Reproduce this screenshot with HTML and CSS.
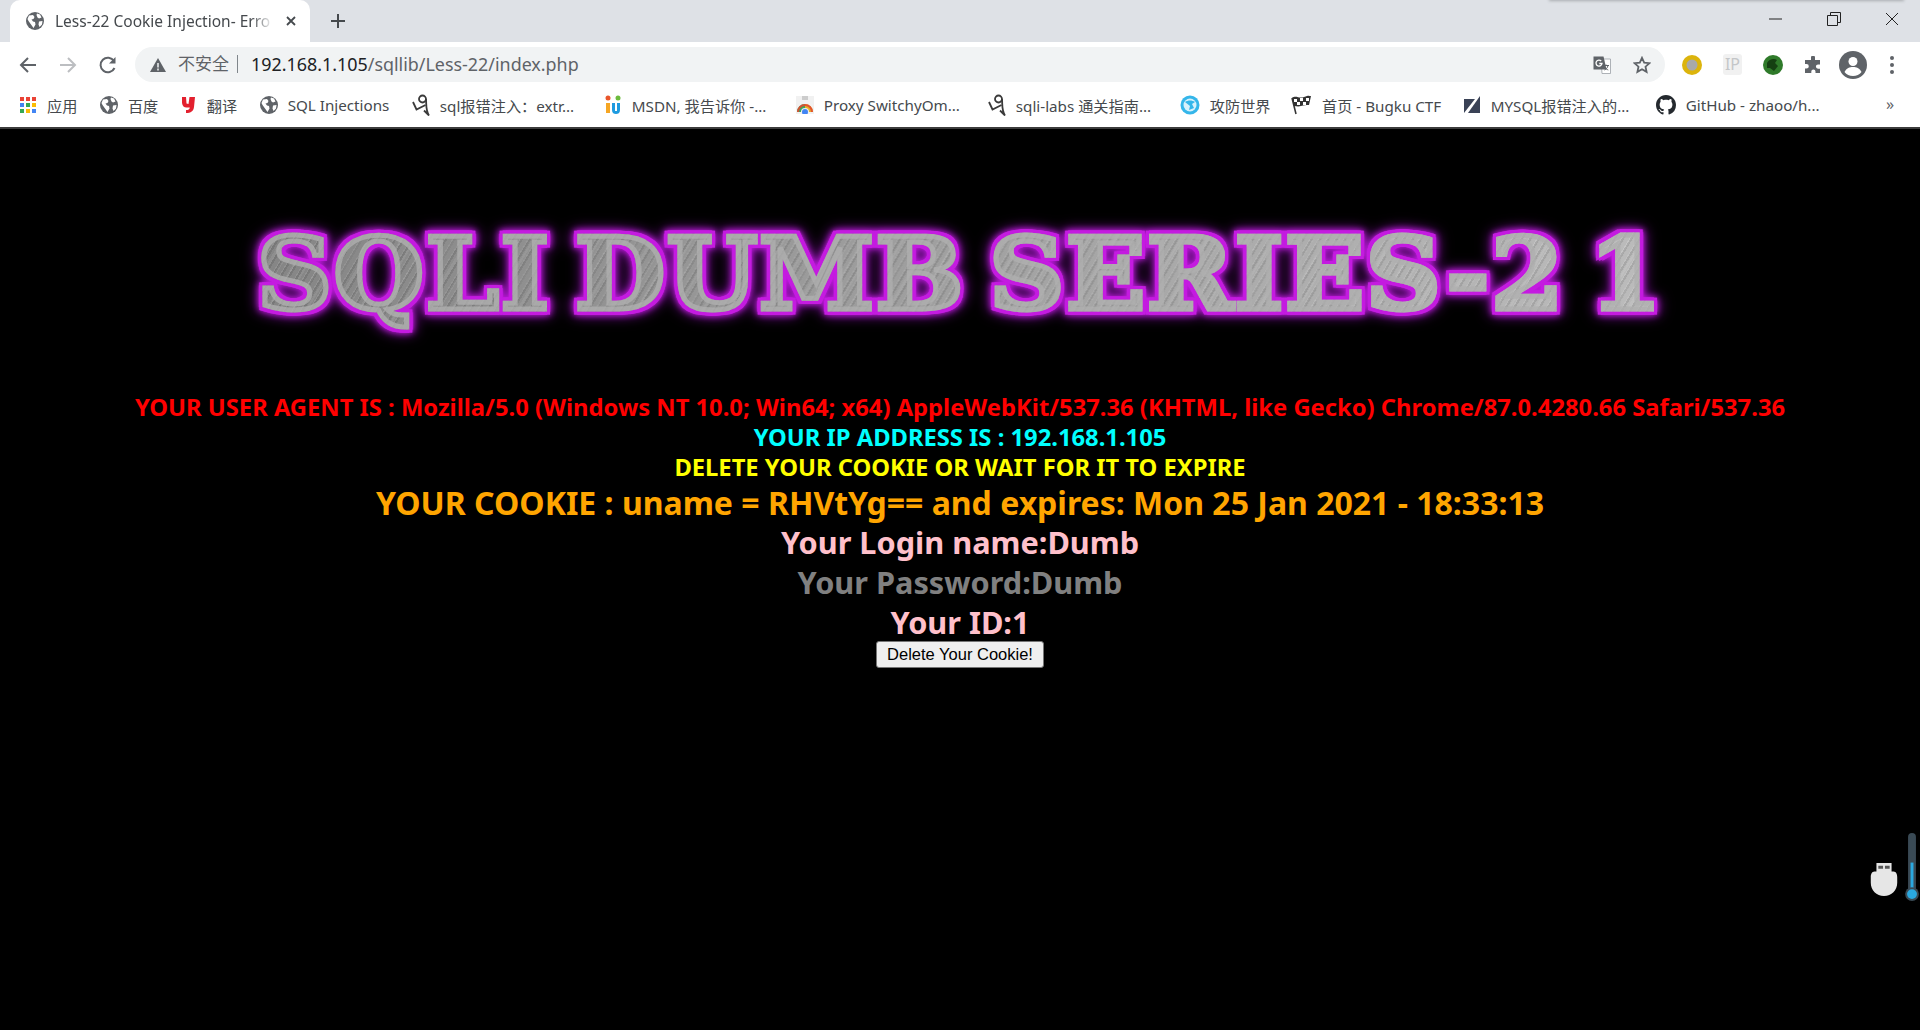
FILE: index.html
```html
<!DOCTYPE html>
<html lang="zh-CN">
<head>
    <meta charset="UTF-8" />
    <title>Less-22 Cookie Injection- Error Based- Double Quotes</title>
    <link rel="stylesheet" href="styles.css">
</head>
<body>

    <svg class="sprites" width="0" height="0">
        <symbol id="globe" viewBox="0 0 18 18">
            <circle cx="9" cy="9" r="9" fill="#5f6368"/>
            <path d="M3 3.500 7 3l1.500 2-1 2-2 .5 1.500 2 2 .5.500 2.500L7.500 16 5 12.500 2.500 9 1.500 7zM11 1.500l3 1 1.500 3-2.500 1-1.500-1-1-2.500zM13 9.500l3.500-.5-.5 3.500-2.500 2.500-1-2.500z" fill="#fff"/>
        </symbol>
        <symbol id="dog" viewBox="0 0 18 22">
            <path d="M1 8l3.500 7.500L13.500 11" fill="none" stroke="#3a3a3a" stroke-width="1.800"/>
            <circle cx="10.500" cy="5" r="3.500" fill="none" stroke="#3a3a3a" stroke-width="1.800"/>
            <path d="M14 5c.5 6-.5 11 3 16.500l-5-5" fill="none" stroke="#3a3a3a" stroke-width="1.800"/>
        </symbol>
    </svg>

    <div class="tab-strip">
        <div class="tab">
            <svg class="tab-icon" width="18" height="18"><use href="#globe"/></svg>
            <span class="tab-title">Less-22 Cookie Injection- Erro</span>
            <svg class="tab-close" width="10" height="10" viewBox="0 0 10 10"><path d="M1 1l8 8M9 1 1 9" stroke="#45494d" stroke-width="1.800"/></svg>
        </div>
        <svg class="new-tab" width="16" height="16" viewBox="0 0 16 16"><path d="M8 1v14M1 8h14" stroke="#45494d" stroke-width="2"/></svg>
        <div class="window-controls">
            <svg width="14" height="14" viewBox="0 0 14 14"><path d="M0 7h13" stroke="#222" stroke-width="1"/></svg>
            <svg width="14" height="14" viewBox="0 0 14 14"><path d="M.5 3.500h10v10H.5zM3.500 3.500v-3h10v10h-3" fill="none" stroke="#222"/></svg>
            <svg width="14" height="14" viewBox="0 0 14 14"><path d="M1 1l12 12M13 1 1 13" stroke="#222"/></svg>
        </div>
    </div>

    <div class="toolbar">
        <svg class="nav-icon" width="18" height="18" viewBox="0 0 18 18"><path d="M17 9H2M9 2 2 9l7 7" fill="none" stroke="#5f6368" stroke-width="2"/></svg>
        <svg class="nav-icon" width="18" height="18" viewBox="0 0 18 18"><path d="M1 9h15M9 2l7 7-7 7" fill="none" stroke="#bcbec1" stroke-width="2"/></svg>
        <svg class="nav-icon" width="18" height="18" viewBox="0 0 18 18"><path d="M15.500 12A7.300 7.300 0 1 1 15 5" fill="none" stroke="#5f6368" stroke-width="2"/><path d="M16.500 1v6.500H10z" fill="#5f6368"/></svg>
        <div class="omnibox">
            <svg class="warn-icon" width="16" height="14" viewBox="0 0 16 14"><path d="M8 0l8 14H0z" fill="#5f6368"/><path d="M8 5v4.500M8 10.500v2" stroke="#f1f3f4" stroke-width="1.500"/></svg>
            <span class="not-secure">不安全</span>
            <span class="url"><b>192.168.1.105</b>/sqllib/Less-22/index.php</span>
            <svg class="omni-icon" width="18" height="18" viewBox="0 0 18 18"><path d="M8 3h9.500v14.500H9z" fill="#fff" stroke="#9aa0a6" stroke-width=".8"/><path d="M.5.500h10l3 13H.5z" fill="#5f6368"/><path d="M8.200 5A3 3 0 1 0 9 7.500H6.300" fill="none" stroke="#fff" stroke-width="1.300"/><path d="M10.500 9.500h5.500M13 8.500v1M15 9.500c-.5 2.500-2 3.800-3.500 4.500M11.500 11c1 1.500 2.500 2.500 3.800 3" fill="none" stroke="#5f6368"/></svg>
            <svg class="omni-icon" width="18" height="18" viewBox="0 0 18 18"><path d="M9 1.800l2.200 4.800 5.200.6-3.900 3.500 1.100 5.200L9 13.300l-4.600 2.600 1.100-5.200L1.600 7.200l5.200-.6z" fill="none" stroke="#5f6368" stroke-width="1.800"/></svg>
        </div>
        <div class="extensions">
            <svg width="20" height="20" viewBox="0 0 20 20"><circle cx="10" cy="10" r="10" fill="#dcb40c"/><circle cx="10" cy="10" r="5.500" fill="#a9a9a9"/></svg>
            <span class="ip-ext">IP</span>
            <svg width="20" height="20" viewBox="0 0 20 20"><circle cx="10" cy="10" r="10" fill="#2f7a2a"/><path d="M4 8c2-4 7-5 10-3l-2 3 3 3-4 5-4-3-3 0z" fill="#153f12"/></svg>
            <svg width="18" height="18" viewBox="0 0 18 18"><path d="M7 1.500a2 2 0 0 1 4 0V4h5v4.500h-2a2.100 2.100 0 0 0 0 4.200h2V17h-4.500v-1.500a2.100 2.100 0 0 0-4.200 0V17H1v-4.500h1.500a2.300 2.300 0 0 0 0-4.600H1V4h6z" fill="#5f6368"/></svg>
            <svg class="avatar" width="28" height="28" viewBox="0 0 28 28"><circle cx="14" cy="14" r="14" fill="#5f6368"/><circle cx="14" cy="10.500" r="4.500" fill="#fff"/><path d="M5.500 21c2-4 5-5 8.500-5s6.500 1 8.500 5c-2 2.500-5 4-8.500 4s-6.500-1.500-8.500-4z" fill="#fff"/></svg>
            <svg class="menu-dots" width="4" height="18" viewBox="0 0 4 18"><circle cx="2" cy="2" r="2" fill="#5f6368"/><circle cx="2" cy="9" r="2" fill="#5f6368"/><circle cx="2" cy="16" r="2" fill="#5f6368"/></svg>
        </div>
    </div>

    <div class="bookmarks">
        <a class="bookmark">
            <svg width="17" height="17" viewBox="0 0 17 17">
                <path d="M0 0h4v4H0z" fill="#ea4335"/><path d="M6 0h4v4H6z" fill="#ea4335"/><path d="M12 0h4v4h-4z" fill="#ea4335"/>
                <path d="M0 6h4v4H0z" fill="#4285f4"/><path d="M6 6h4v4H6z" fill="#34a853"/><path d="M12 6h4v4h-4z" fill="#fbbc05"/>
                <path d="M0 12h4v4H0z" fill="#34a853"/><path d="M6 12h4v4H6z" fill="#fbbc05"/><path d="M12 12h4v4h-4z" fill="#4285f4"/>
            </svg>
            <span>应用</span>
        </a>
        <a class="bookmark"><svg width="18" height="18"><use href="#globe"/></svg><span>百度</span></a>
        <a class="bookmark">
            <svg width="16" height="18" viewBox="0 0 16 18"><path d="M1 1h4l.5 6.500 2 .5L8.500 1H14l-1 10c-.5 4-3 6-8 6v-3c2.500 0 3.500-.5 3.800-2.500H5.500C3 11.500 1.500 10 1 7z" fill="#e3202e"/></svg>
            <span>翻译</span>
        </a>
        <a class="bookmark"><svg width="18" height="18"><use href="#globe"/></svg><span>SQL Injections</span></a>
        <a class="bookmark long"><svg width="18" height="22"><use href="#dog"/></svg><span>sql报错注入：extr...</span></a>
        <a class="bookmark long">
            <svg width="18" height="20" viewBox="0 0 18 20"><circle cx="4" cy="3" r="2.500" fill="#e9562a"/><circle cx="14" cy="3" r="2.500" fill="#6cbb3c"/><path d="M2 8h4v10H2z" fill="#f6a623"/><path d="M8 8v7c0 3 2 4 4 4s4-1 4-4V8h-3v8h-2V8z" fill="#1e9be0"/></svg>
            <span>MSDN, 我告诉你 -...</span>
        </a>
        <a class="bookmark long">
            <svg width="18" height="18" viewBox="0 0 18 18"><path d="M0 0h18v18H0z" fill="#f1f1f1"/><path d="M6 0h6v4H6z" fill="#ccc"/><path d="M1 16a8 8 0 0 1 8-8v4a4 4 0 0 0-4 4z" fill="#3ba55d"/><path d="M9 8a8 8 0 0 1 8 8h-4a4 4 0 0 0-4-4z" fill="#e8b32a"/><path d="M1 16a8 8 0 0 1 16 0h-2a6 6 0 0 0-12 0z" fill="#e2492f" opacity=".9"/><circle cx="9" cy="16" r="3" fill="#4285f4"/></svg>
            <span>Proxy SwitchyOm...</span>
        </a>
        <a class="bookmark long"><svg width="18" height="22"><use href="#dog"/></svg><span>sqli-labs 通关指南...</span></a>
        <a class="bookmark tight">
            <svg width="20" height="20" viewBox="0 0 20 20"><circle cx="10" cy="10" r="9.500" fill="#35b6ea"/><circle cx="10" cy="10" r="6.500" fill="#d8f1fb"/><path d="M5 7c3-2 7-2 10 0l-3 2 2 4-5 2 1-4z" fill="#35b6ea"/></svg>
            <span>攻防世界</span>
        </a>
        <a class="bookmark">
            <svg width="21" height="20" viewBox="0 0 21 20"><path d="M1 3c4-3 7 1 12-1s5-1 7-1l-2 9c-3 0-5 0-8 1s-5 0-7 0z" fill="#333"/><path d="M3 4h3v3H3zM9 3h3v3H9zM15 3h3v3h-3zM6 7h3v3H6zM12 7h3v3h-3z" fill="#fff"/><path d="M1 3l4 16" stroke="#333" stroke-width="1.500"/></svg>
            <span>首页 - Bugku CTF</span>
        </a>
        <a class="bookmark long">
            <svg width="17" height="18" viewBox="0 0 17 18"><path d="M0 3h11L0 17z" fill="#3a4256"/><path d="M16 0v17H4z" fill="#3a4256"/></svg>
            <span>MYSQL报错注入的...</span>
        </a>
        <a class="bookmark long">
            <svg width="20" height="20" viewBox="0 0 16 16"><path fill="#24292e" d="M8 0C3.580 0 0 3.580 0 8c0 3.540 2.290 6.530 5.470 7.590.4.070.55-.17.55-.38 0-.19-.01-.82-.01-1.490-2.010.37-2.530-.49-2.690-.94-.09-.23-.48-.94-.82-1.130-.28-.15-.68-.52-.01-.53.630-.01 1.080.58 1.230.82.720 1.210 1.870.87 2.330.66.070-.52.280-.87.510-1.070-1.780-.2-3.640-.89-3.640-3.950 0-.87.310-1.590.82-2.150-.08-.2-.36-1.020.08-2.120 0 0 .67-.21 2.200.82.640-.18 1.320-.27 2-.27s1.360.09 2 .27c1.530-1.040 2.200-.82 2.200-.82.440 1.100.16 1.920.08 2.120.51.560.82 1.270.82 2.150 0 3.070-1.870 3.750-3.650 3.950.290.25.540.73.540 1.480 0 1.070-.01 1.930-.01 2.200 0 .21.150.46.550.38A8.010 8.010 0 0 0 16 8c0-4.420-3.580-8-8-8z"/></svg>
            <span>GitHub - zhaoo/h...</span>
        </a>
        <span class="more">»</span>
    </div>

    <main class="page">
        <h1 class="banner">SQLI DUMB SERIES-2 1</h1>
        <div class="line agent">YOUR USER AGENT IS : Mozilla/5.0 (Windows NT 10.0; Win64; x64) AppleWebKit/537.36 (KHTML, like Gecko) Chrome/87.0.4280.66 Safari/537.36</div>
        <div class="line ip">YOUR IP ADDRESS IS : 192.168.1.105</div>
        <div class="line notice">DELETE YOUR COOKIE OR WAIT FOR IT TO EXPIRE</div>
        <div class="line cookie">YOUR COOKIE : uname = RHVtYg== and expires: Mon 25 Jan 2021 - 18:33:13</div>
        <div class="line big pink">Your Login name:Dumb</div>
        <div class="line big grey">Your Password:Dumb</div>
        <div class="line big pink">Your ID:1</div>
        <button class="delete-button">Delete Your Cookie!</button>
    </main>

    <div class="mouse-widget">
        <svg class="mouse-icon" width="30" height="34" viewBox="0 0 30 36"><path d="M7 0h16v9h2c3 0 4 3 4 6v6c0 8-6 14-14 14S1 29 1 21v-6c0-3 1-6 4-6h2z" fill="#e6e6e6"/><path d="M9 3h5v3H9zM16 3h5v3h-5z" fill="#555"/></svg>
        <svg width="14" height="69" viewBox="0 0 14 70"><rect x="3" y="0" width="8" height="64" rx="4" fill="#3a4a55"/><path d="M5.500 30h3v34h-3z" fill="#2aa8e0"/><circle cx="7" cy="62" r="7" fill="#3a4a55"/><circle cx="7" cy="62" r="5" fill="#2aa8e0"/></svg>
    </div>

</body>
</html>
```

FILE: styles.css
```css
html, body {
    margin: 0;
    height: 100%;
    overflow: hidden;
}
body {
    display: flex;
    flex-direction: column;
    background-color: #000;
    font-family: "Noto Sans", "Noto Sans CJK SC", sans-serif;
}
.sprites {
    position: absolute;
}

/* browser chrome */
.tab-strip {
    height: 42px;
    flex: none;
    display: flex;
    align-items: flex-end;
    padding-left: 10px;
    background-color: #dee1e6;
    position: relative;
}
.tab-strip::after {
    content: '';
    position: absolute;
    top: -3px;
    left: 1549px;
    width: 355px;
    height: 4px;
    background-color: #a9acb0;
    filter: blur(1.500px);
}
.tab {
    width: 300px;
    height: 42px;
    display: flex;
    align-items: center;
    background-color: #fff;
    border-radius: 10px 10px 0 0;
}
.tab-icon {
    margin-left: 16px;
    flex: none;
}
.tab-title {
    width: 218px;
    margin-left: 11px;
    white-space: nowrap;
    font-size: 15.500px;
    color: #45494d;
    -webkit-mask-image: linear-gradient(90deg, #000 90%, transparent);
    mask-image: linear-gradient(90deg, #000 90%, transparent);
}
.tab-close {
    margin-left: 13px;
    flex: none;
}
.new-tab {
    align-self: center;
    margin-left: 20px;
}
.window-controls {
    margin-left: auto;
    align-self: flex-start;
    display: flex;
    gap: 44px;
    padding: 12px 21px 0 0;
}
.toolbar {
    height: 45px;
    flex: none;
    display: flex;
    align-items: center;
    background-color: #fff;
}
.nav-icon {
    margin-left: 19px;
    margin-right: 3px;
}
.nav-icon + .nav-icon {
    margin-left: 19px;
}
.omnibox {
    width: 1530px;
    height: 35px;
    margin-left: 15px;
    box-sizing: border-box;
    padding: 0 14px 0 15px;
    display: flex;
    align-items: center;
    background-color: #f1f3f4;
    border-radius: 18px;
}
.not-secure {
    margin-left: 12px;
    margin-bottom: 1px;
    padding-right: 8px;
    border-right: 1px solid #80868b;
    line-height: 18px;
    font-size: 17px;
    color: #5f6368;
}
.url {
    margin-left: 13px;
    margin-bottom: 2px;
    font-size: 17.900px;
    color: #5f6368;
}
.url b {
    font-weight: normal;
    color: #202124;
}
.omni-icon {
    margin-left: auto;
}
.omni-icon + .omni-icon {
    margin-left: 22px;
}
.extensions {
    display: flex;
    align-items: center;
    margin-left: 17px;
    gap: 21px;
}
.ip-ext {
    width: 19px;
    height: 21px;
    text-align: center;
    line-height: 21px;
    font-size: 16px;
    color: #c4c6c8;
    background-color: #f1f1f1;
    border-radius: 3px;
}
.avatar {
    margin-left: -4px;
}
.menu-dots {
    margin-left: 2px;
}
.bookmarks {
    height: 42px;
    flex: none;
    box-sizing: border-box;
    display: flex;
    align-items: center;
    padding: 0 0 4px 20px;
    gap: 22.500px;
    background-color: #fff;
    border-bottom: 2px solid #3c3c3c;
    position: relative;
}
.bookmark {
    display: flex;
    align-items: center;
    gap: 10px;
    font-size: 15.200px;
    white-space: nowrap;
    color: #45494d;
}
.bookmark.long {
    width: 169.500px;
}
.bookmark.tight {
    margin-right: -2px;
}
.more {
    position: absolute;
    left: 1886px;
    top: 6px;
    font-size: 16px;
    color: #5f6368;
}

/* page content */
.page {
    flex: 1;
    display: flex;
    flex-direction: column;
    align-items: center;
    background-color: #000;
}
.banner {
    margin: 85px 0 0;
    font-family: "DejaVu Serif", serif;
    font-size: 100px;
    line-height: 120px;
    font-weight: bold;
    letter-spacing: 1.500px;
    word-spacing: -13px;
    white-space: nowrap;
    color: transparent;
    -webkit-text-stroke: 5px rgba(175,175,175,0.8);
    background-image:
        repeating-linear-gradient(120deg, rgba(255,255,255,0.1) 0 1px, rgba(0,0,0,0.1) 1px 3px, rgba(255,255,255,0) 3px 7px),
        repeating-linear-gradient(120deg, rgba(255,255,255,0.08) 0 2px, rgba(0,0,0,0) 2px 11px),
        linear-gradient(90deg, #858585, #bcbcbc);
    -webkit-background-clip: text;
    background-clip: text;
    transform: scaleX(1.04);
    filter:
        drop-shadow(3px 0 0 #c41be0) drop-shadow(-3px 0 0 #c41be0)
        drop-shadow(0 3px 0 #c41be0) drop-shadow(0 -3px 0 #c41be0)
        drop-shadow(0 0 3px #c41be0) drop-shadow(0 0 6px #8010a0);
}
.line {
    font-weight: 700;
    text-align: center;
    white-space: nowrap;
    font-size: 23.750px;
    line-height: 30px;
}
.agent {
    margin-top: 58px;
    color: #f00;
}
.ip {
    color: #0ff;
}
.notice {
    color: #ff0;
}
.cookie {
    margin-top: 1px;
    font-size: 32px;
    line-height: 39px;
    color: #ffa500;
}
.big {
    font-size: 30.700px;
    line-height: 40px;
}
.pink {
    color: #ffc0cb;
}
.grey {
    color: #808080;
}
.delete-button {
    width: 168px;
    height: 27px;
    margin-top: -1px;
    padding: 0;
    font-family: "Liberation Sans", sans-serif;
    font-size: 16.500px;
    color: #000;
    background-color: #efefef;
    border: 1px solid #767676;
    border-radius: 3px;
}

/* floats over the page at the right edge */
.mouse-widget {
    position: absolute;
    left: 1869px;
    top: 833px;
    display: flex;
    align-items: flex-end;
    gap: 6px;
}
.mouse-icon {
    margin-bottom: 5px;
}
```
